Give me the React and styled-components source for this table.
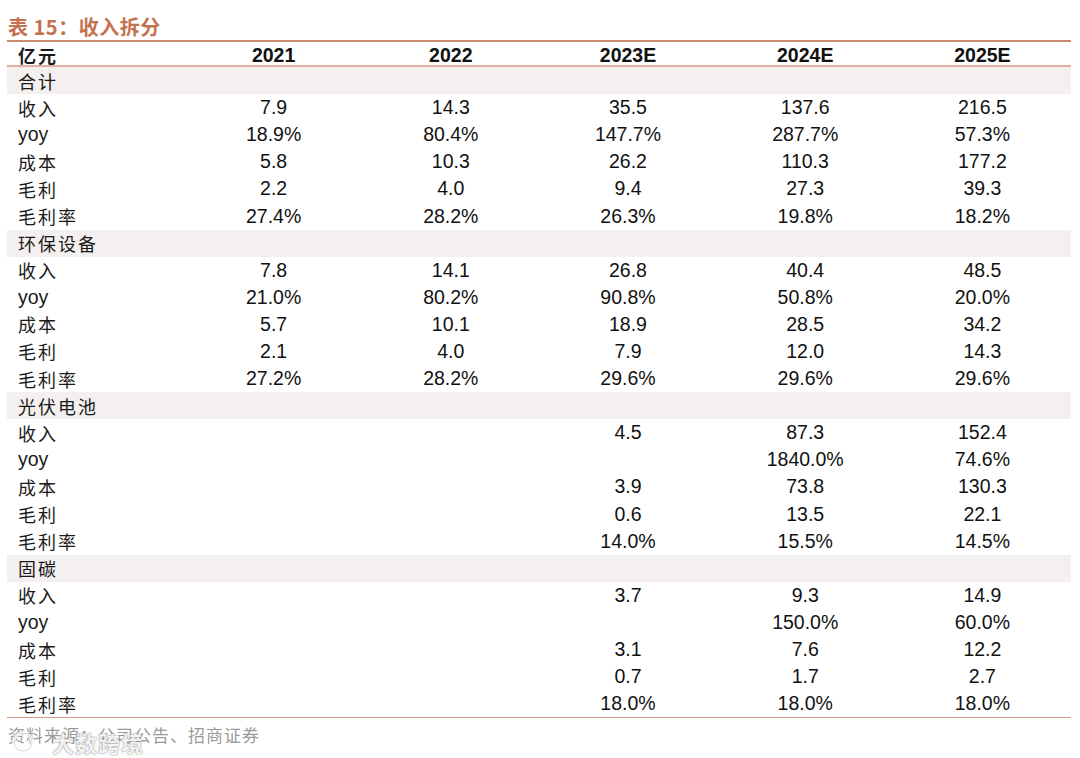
import styled, { createGlobalStyle } from 'styled-components';

const GlobalStyle = createGlobalStyle`
  body {
    margin: 0;
    background: #ffffff;
  }
`;

const Page = styled.div`
  position: relative;
  width: 1080px;
  height: 758px;
  padding: 0 9px 0 7px;
  box-sizing: border-box;
  background: #ffffff;
`;

const Title = styled.div`
  height: 40px;
  display: flex;
  align-items: flex-end;
  padding: 0 0 3px 1px;
  box-sizing: border-box;
  font-family: "Noto Sans CJK SC", sans-serif;
  font-weight: 700;
  font-size: 20px;
  line-height: 1;
  color: #c4724e;
  letter-spacing: 0.5px;
`;

const Table = styled.div`
  border-top: 2px solid #c98a70;
  border-bottom: 1px solid #d49a86;
`;

const Row = styled.div`
  display: grid;
  grid-template-columns: 178px repeat(5, 1fr);
  align-items: center;
  height: ${p => p.$h || 27.1}px;
  background: ${p => (p.$section ? '#f3f0ef' : 'transparent')};
  border-bottom: ${p => (p.$head ? '2px solid #ddb0a2' : 'none')};
  box-sizing: border-box;
`;

const Label = styled.div`
  padding-left: 11px;
  font-family: ${p => (p.$latin ? '"Liberation Sans", Arial, sans-serif' : '"Noto Sans CJK SC", sans-serif')};
  font-size: ${p => (p.$latin ? '19.5px' : '18px')};
  font-weight: ${p => (p.$bold ? 700 : 400)};
  color: #1a1a1a;
  letter-spacing: ${p => (p.$latin ? '0' : '2px')};
  white-space: nowrap;
`;

const Cell = styled.div`
  text-align: center;
  font-family: "Liberation Sans", Arial, sans-serif;
  font-size: 19.5px;
  font-weight: ${p => (p.$bold ? 700 : 400)};
  color: #111111;
  white-space: nowrap;
`;

const Source = styled.div`
  padding: 4px 0 0 1px;
  font-family: "Noto Sans CJK SC", sans-serif;
  font-size: 17px;
  color: #9a9a9a;
  letter-spacing: 1px;
`;

const Watermark = styled.div`
  position: absolute;
  left: 12px;
  top: 726px;
  display: flex;
  align-items: center;
  gap: 18px;
  font-family: "Noto Sans CJK SC", sans-serif;
  font-weight: 700;
  font-size: 22px;
  color: rgba(255, 255, 255, 0.92);
  text-shadow: 0 0 2px rgba(90, 90, 90, 0.55), 0 0 1px rgba(90, 90, 90, 0.6);
  letter-spacing: 1px;
`;

const years = ['2021', '2022', '2023E', '2024E', '2025E'];

const sections = [
  {
    name: '合计',
    rows: [
      ['收入', ['7.9', '14.3', '35.5', '137.6', '216.5']],
      ['yoy', ['18.9%', '80.4%', '147.7%', '287.7%', '57.3%']],
      ['成本', ['5.8', '10.3', '26.2', '110.3', '177.2']],
      ['毛利', ['2.2', '4.0', '9.4', '27.3', '39.3']],
      ['毛利率', ['27.4%', '28.2%', '26.3%', '19.8%', '18.2%']],
    ],
  },
  {
    name: '环保设备',
    rows: [
      ['收入', ['7.8', '14.1', '26.8', '40.4', '48.5']],
      ['yoy', ['21.0%', '80.2%', '90.8%', '50.8%', '20.0%']],
      ['成本', ['5.7', '10.1', '18.9', '28.5', '34.2']],
      ['毛利', ['2.1', '4.0', '7.9', '12.0', '14.3']],
      ['毛利率', ['27.2%', '28.2%', '29.6%', '29.6%', '29.6%']],
    ],
  },
  {
    name: '光伏电池',
    rows: [
      ['收入', ['', '', '4.5', '87.3', '152.4']],
      ['yoy', ['', '', '', '1840.0%', '74.6%']],
      ['成本', ['', '', '3.9', '73.8', '130.3']],
      ['毛利', ['', '', '0.6', '13.5', '22.1']],
      ['毛利率', ['', '', '14.0%', '15.5%', '14.5%']],
    ],
  },
  {
    name: '固碳',
    rows: [
      ['收入', ['', '', '3.7', '9.3', '14.9']],
      ['yoy', ['', '', '', '150.0%', '60.0%']],
      ['成本', ['', '', '3.1', '7.6', '12.2']],
      ['毛利', ['', '', '0.7', '1.7', '2.7']],
      ['毛利率', ['', '', '18.0%', '18.0%', '18.0%']],
    ],
  },
];

function LogoMark() {
  return (
    <svg width="22" height="22" viewBox="0 0 22 22">
      <circle cx="11" cy="11" r="9" fill="none" stroke="rgba(255,255,255,0.9)" strokeWidth="3" />
      <circle cx="11" cy="11" r="9" fill="none" stroke="rgba(110,110,110,0.35)" strokeWidth="0.8" />
    </svg>
  );
}

export default function App() {
  return (
    <>
      <GlobalStyle />
      <Page>
        <Title>表 15：收入拆分</Title>
        <Table>
          <Row $head $h={25}>
            <Label $bold>亿元</Label>
            {years.map(y => (
              <Cell key={y} $bold>{y}</Cell>
            ))}
          </Row>
          {sections.map(s => (
            <div key={s.name}>
              <Row $section>
                <Label>{s.name}</Label>
              </Row>
              {s.rows.map(([name, vals]) => (
                <Row key={name}>
                  <Label $latin={name === 'yoy'}>{name}</Label>
                  {vals.map((v, i) => (
                    <Cell key={i}>{v}</Cell>
                  ))}
                </Row>
              ))}
            </div>
          ))}
        </Table>
        <Source>资料来源：公司公告、招商证券</Source>
        <Watermark>
          <LogoMark />
          <span>大数跨境</span>
        </Watermark>
      </Page>
    </>
  );
}
